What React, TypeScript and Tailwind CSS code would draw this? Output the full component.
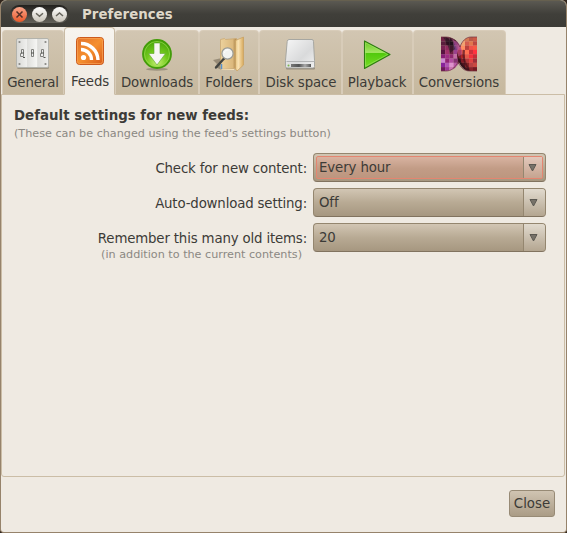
import React from "react";

function GeneralIcon() {
  return (
    <svg width="36" height="36" viewBox="0 0 36 36">
      <defs>
        <linearGradient id="plate" x1="0" x2="1" y1="0" y2="0">
          <stop offset="0" stopColor="#d8d8d5" />
          <stop offset=".33" stopColor="#f0f0ee" />
          <stop offset=".34" stopColor="#dfdfdc" />
          <stop offset=".64" stopColor="#f6f6f4" />
          <stop offset=".66" stopColor="#dcdcd9" />
          <stop offset="1" stopColor="#eeeeec" />
        </linearGradient>
      </defs>
      <rect x="2" y="30" width="32" height="3" rx="1.5" fill="#8d8371" opacity=".7" />
      <rect x="1.5" y="2.5" width="32" height="29" rx="1.5" fill="url(#plate)" stroke="#b3b3ac" />
      <path d="M6.500 13.500h2v7h-3v-3h1zM16.500 13.500h2v7h-2zM26.500 13.500h2v7h-3v-3h1z" fill="#eee" stroke="#80817d" />
      <path d="M6 17h3M16 17h3M26 17h3M8 21.500h2M28.500 21.500h2" stroke="#555753" />
      {[4.5, 30.5].map((x) => [6, 28].map((y) => <circle key={`${x}-${y}`} cx={x} cy={y} r="1.1" fill="#898985" />))}
    </svg>
  );
}

function FeedsIcon() {
  return (
    <svg width="36" height="36" viewBox="0 0 36 36">
      <defs>
        <linearGradient id="rss" x1="0" y1="0" x2="1" y2="1">
          <stop offset="0" stopColor="#e2702c" />
          <stop offset=".5" stopColor="#f5902f" />
          <stop offset="1" stopColor="#d85a1a" />
        </linearGradient>
      </defs>
      <rect x="4.5" y="3.5" width="27" height="27" rx="3" fill="url(#rss)" stroke="#cc5a1d" />
      <rect x="5.5" y="4.5" width="25" height="25" rx="2" fill="none" stroke="#f8a153" opacity=".75" />
      <circle cx="11.5" cy="23.5" r="2.6" fill="#fff" />
      <path d="M9 15.5a10.5 10.5 0 0 1 10.5 10.5M9 9.5a17 17 0 0 1 17 16.5" stroke="#fff" strokeWidth="3.4" fill="none" />
    </svg>
  );
}

function DownloadsIcon() {
  return (
    <svg width="36" height="36" viewBox="0 0 36 36">
      <defs>
        <radialGradient id="down" cx=".5" cy=".8" r=".75">
          <stop offset="0" stopColor="#c5ef73" />
          <stop offset=".5" stopColor="#73c91d" />
          <stop offset="1" stopColor="#4aa80c" />
        </radialGradient>
      </defs>
      <ellipse cx="18" cy="33.3" rx="11" ry="1.5" fill="#776e5f" opacity=".55" />
      <circle cx="18" cy="18" r="14" fill="url(#down)" stroke="#439c0a" strokeWidth="1.8" />
      <circle cx="18" cy="18" r="12.5" fill="none" stroke="#9add50" opacity=".7" />
      <path d="M15 7h6v10.500h5.500L18 29 9.500 17.500H15z" fill="#f6f6f4" stroke="#5da42d" strokeWidth=".6" />
    </svg>
  );
}

function FoldersIcon() {
  return (
    <svg width="36" height="36" viewBox="0 0 36 36">
      <defs>
        <linearGradient id="folder" x1="0" x2="1" y1="0" y2="0">
          <stop offset="0" stopColor="#e7c583" />
          <stop offset=".35" stopColor="#fae3b4" />
          <stop offset="1" stopColor="#d7a95c" />
        </linearGradient>
        <linearGradient id="folderBack" x1="0" x2="1" y1="0" y2="0">
          <stop offset="0" stopColor="#ecd19c" />
          <stop offset=".75" stopColor="#dcb97d" />
          <stop offset="1" stopColor="#a98248" />
        </linearGradient>
      </defs>
      <path d="M2 24l9-2v12l-7-3 2-3z" fill="#776b58" opacity=".6" />
      <path d="M9.5 3.5l4-1 1 1 11-1v30h-16z" fill="url(#folderBack)" stroke="#cbaa74" strokeWidth=".8" />
      <path d="M24.500 4.500l8-3.500v28L26 35l-1.500-2z" fill="url(#folder)" stroke="#c9a263" strokeWidth=".8" />
      <path d="M10 33l13 .5" stroke="#f8e2b5" />
      <path d="M10.5 28v5" stroke="#5592d0" strokeWidth="1.5" />
      <path d="M13 22.5L5 31.5" stroke="#434441" strokeWidth="2.4" strokeLinecap="round" />
      <circle cx="16.5" cy="17.5" r="5.6" fill="#f2f3f1" stroke="#989a96" strokeWidth="1.2" />
      <path d="M13.5 17a3.5 3.5 0 0 1 4-3" fill="none" stroke="#fff" />
    </svg>
  );
}

function DiskIcon() {
  return (
    <svg width="36" height="36" viewBox="0 0 36 36">
      <defs>
        <linearGradient id="disk" x1="0" y1="0" x2="1" y2="1">
          <stop offset="0" stopColor="#f6f6f6" />
          <stop offset=".6" stopColor="#d9dadb" />
          <stop offset="1" stopColor="#f1f1f1" />
        </linearGradient>
        <linearGradient id="slot">
          <stop offset="0" stopColor="#777" />
          <stop offset=".4" stopColor="#525354" />
          <stop offset=".7" stopColor="#aaa" />
          <stop offset="1" stopColor="#555" />
        </linearGradient>
      </defs>
      <rect x="3" y="31" width="29" height="2.5" rx="1" fill="#797062" opacity=".6" />
      <path d="M6 3.5h23q1.5 0 1.500 2l1 19v6q0 1.5-1.5 1.5H4q-1.500 0-1.500-1.500v-6l1.700-19q.3-2 1.800-2z" fill="url(#disk)" stroke="#a0a19d" strokeWidth=".9" />
      <path d="M3.500 25.500h28" fill="none" stroke="#b3b4b5" />
      <rect x="8" y="28" width="20" height="3" fill="url(#slot)" />
      <circle cx="5.500" cy="29.500" r="1" fill="#7bb64c" />
    </svg>
  );
}

function PlaybackIcon() {
  return (
    <svg width="36" height="36" viewBox="0 0 36 36">
      <defs>
        <linearGradient id="play" x1="0" y1="0" x2="0" y2="1">
          <stop offset="0" stopColor="#62c51a" />
          <stop offset=".42" stopColor="#a5e663" />
          <stop offset=".45" stopColor="#51c90c" />
          <stop offset="1" stopColor="#79dc28" />
        </linearGradient>
      </defs>
      <path d="M5.500 4.900v27.500L31 18.500z" fill="url(#play)" stroke="#2e7b12" strokeWidth="1.100" strokeLinejoin="round" />
      <path d="M6.500 6.800v23.600L28.700 18.500z" fill="none" stroke="#a4e86b" strokeWidth=".9" opacity=".6" />
    </svg>
  );
}

const leftTiles = [
  ["#722347", "#562039", "#37162a", "#3c1427", "#97334b"],
  ["#5b1d3d", "#411329", "#28111f", "#6c3073", "#9e599b"],
  ["#792252", "#8f2b5c", "#65213d", "#74407d", "#b75c98"],
  ["#591341", "#a2316c", "#6e2142", "#9a418e", "#bd5a7d"],
  ["#871e77", "#9f2d84", "#8f286f", "#c36ca5", "#853257"],
  ["#d08bd4", "#912276", "#b24b9f", "#863172", "#54152d"],
  ["#88239a", "#b155b4", "#de92cd", "#b958a8", "#632046"],
  ["#6e175c", "#9e3497", "#c971b1", "#973478", "#32101e"],
];
const rightTiles = [
  ["#b7603c", "#dc895b", "#d67852", "#bb5948", "#cc5947"],
  ["#e58a63", "#f1a271", "#d45c4d", "#e2754d", "#bd4740"],
  ["#d45356", "#ff8f62", "#b9413d", "#ef514a", "#f85743"],
  ["#9d2433", "#d64e45", "#ff7152", "#cd303b", "#ff323f"],
  ["#7d1d29", "#b12728", "#e35a49", "#f3303c", "#c52d38"],
  ["#471522", "#831b25", "#b73839", "#df4141", "#9f2e39"],
  ["#30131b", "#51151f", "#862226", "#b94243", "#c94841"],
  ["#1f1118", "#3b121b", "#6b1b22", "#8b222a", "#751821"],
];

function ConversionsIcon() {
  return (
    <svg width="36" height="36" viewBox="0 0 36 36">
      <defs>
        <clipPath id="wingLeft"><path d="M0 1h5c8 0 13 5 15 11 2 5 2 11-2 15-3 5-7 8-13 8H0z" /></clipPath>
        <clipPath id="wingRight"><path d="M36 1v34h-7c-7 0-12-8-13-16 0-3 1-5 3-8 2-6 6-10 11-10z" /></clipPath>
      </defs>
      <g clipPath="url(#wingLeft)">
        {leftTiles.map((row, y) => row.map((c, x) => <rect key={`${x}-${y}`} x={x * 4.2} y={y * 4.3 + 1} width="4.3" height="4.4" fill={c} />))}
        <path d="M5 1q7 4 9 12l-5 4Q7 8 2 1z" fill="#180f17" opacity=".5" />
      </g>
      <g clipPath="url(#wingRight)">
        {rightTiles.map((row, y) => row.map((c, x) => <rect key={`${x}-${y}`} x={x * 4 + 16} y={y * 4.3 + 1} width="4.1" height="4.4" fill={c} />))}
        <path d="M16 15q3 15 14 20H16z" fill="#190d14" opacity=".5" />
        <path d="M23 14q-2 9 5 20" fill="none" stroke="#210e17" strokeWidth="2" opacity=".45" />
      </g>
      <path d="M10 2.500c7 3 12 9 11 16l-4 2q-1-11-7-18z" fill="#b5508c" opacity=".55" />
      <path d="M0 1h5c6 0 11 4 14 10 2-6 6-10 11-10h6M0 35h5c5 0 9-3 12-9 3 6 6 9 12 9h7" fill="none" stroke="#713344" strokeWidth=".7" />
    </svg>
  );
}

const tabs = [
  { label: "General", width: "w-[62px]", Icon: GeneralIcon },
  { label: "Feeds", width: "w-[51px] pl-px", Icon: FeedsIcon },
  { label: "Downloads", width: "w-[84px]", Icon: DownloadsIcon },
  { label: "Folders", width: "w-[60px]", Icon: FoldersIcon },
  { label: "Disk space", width: "w-[83px] pl-px", Icon: DiskIcon },
  { label: "Playback", width: "w-[71px] pr-px", Icon: PlaybackIcon },
  { label: "Conversions", width: "w-[93px] pr-px", Icon: ConversionsIcon },
];

function TitleBar() {
  return (
    <header className="flex h-[27px] shrink-0 items-center rounded-t-[6px] border-t border-[#66604f] bg-linear-to-b from-[#5b5952] via-[#403f3a] via-50% to-[#3b3a35] pl-[9px]">
      <div className="flex h-[18px] w-[59px] items-center justify-center gap-[5px] rounded-full bg-linear-to-b from-[#22211e] to-[#63615a]">
        {["M4.500 4.500l6 6M10.500 4.500l-6 6", "M4 6.300l3.500 3 3.500-3", "M4 9l3.500-3L11 9"].map((d, i) => (
          <button key={d} className={`size-[15px] rounded-full ${i === 0 ? "bg-linear-to-b from-[#f9a387] to-[#e85725]" : "bg-linear-to-b from-white to-[#c9c4b9]"}`}>
            <svg width="15" height="15" viewBox="0 0 15 15" fill="none" stroke={i === 0 ? "#553027" : "#65635b"} strokeWidth="1.500">
              <path d={d} />
            </svg>
          </button>
        ))}
      </div>
      <h1 className="ml-[13px] pt-[2px] text-[13.33px] leading-4 font-bold tracking-[0.06px] text-[#dfd8c9]">Preferences</h1>
    </header>
  );
}

function Tab({ label, width, Icon }: (typeof tabs)[number]) {
  const active = label === "Feeds";
  return (
    <button
      className={`${width} flex shrink-0 flex-col items-center rounded-t-[4px] border ${
        active
          ? "z-10 h-[68px] border-[#c9bba5] border-b-[#efeae2] bg-linear-to-b from-[#f7f4ef] to-[#efeae2] pt-[6px]"
          : "h-[65px] border-[#d8ccb9] border-b-[#c9b99e] bg-linear-to-b from-[#d2c6b2] to-[#c6b89e] pt-[5px]"
      }`}
    >
      <Icon />
      <span className={`${active ? "mt-[3px]" : "mt-[2px]"} text-[13.33px] leading-[18px] tracking-[-0.12px] whitespace-nowrap`}>{label}</span>
    </button>
  );
}

function Select({ value, focused = false }: { value: string; focused?: boolean }) {
  return (
    <button className="flex h-[29px] w-[233px] overflow-hidden rounded-[4px] border border-[#94866f] border-b-[#81735f] bg-linear-to-b from-[#d2c6b4] via-[#b8aa94] via-50% to-[#a69780] text-left">
      <span className={`flex w-full ${focused ? "m-[2px] h-[23px] rounded-[2px] border border-[#e48570] bg-linear-to-b from-[#d8b3a1] via-[#c29c86] via-55% to-[#bd967f]" : "h-full"}`}>
        <span className={`flex-1 ${focused ? "pl-[2px] leading-[21px]" : "pl-[5px] leading-[27px]"} text-[13.33px] tracking-[-0.12px]`}>{value}</span>
        <span className={`flex justify-center border-l border-[#94866f] ${focused ? "w-[19px] bg-linear-to-b from-[#e2c8bb] to-[#c5a490] pt-[6px]" : "w-[22px] bg-linear-to-b from-[#e1dace] to-[#b4a691] pt-[9px]"}`}>
          <svg className={focused ? "-ml-px" : "-ml-[2px]"} width="9" height="9" viewBox="0 0 9 9">
            <path d="M1 1.500h7L4.500 8z" fill="#777269" stroke="#5b5851" />
          </svg>
        </span>
      </span>
    </button>
  );
}

export default function App() {
  return (
    <div className="h-[533px] w-[567px] overflow-hidden bg-[#30251c] text-[#3c3b37]" style={{ fontFamily: '"DejaVu Sans", sans-serif' }}>
      <div className="flex h-full flex-col rounded-t-[6px] rounded-b-[4px] border-r border-b border-l border-[#96836b] bg-[#efeae2]">
        <TitleBar />
        <nav className="flex h-[68px] shrink-0 items-end pl-px">
          {tabs.map((tab) => <Tab key={tab.label} {...tab} />)}
        </nav>
        <main className="-mt-px mr-px h-[383px] shrink-0 rounded-b-[3px] border border-[#cbbda6] pt-[12px] pr-[11px] pl-[12px]">
          <h2 className="h-[18px] text-[13.33px] leading-[18px] font-bold tracking-[0.03px] whitespace-nowrap">Default settings for new feeds:</h2>
          <p className="h-[18px] text-[11.2px] leading-[18px] whitespace-nowrap text-[#8b8882]">(These can be changed using the feed's settings button)</p>
          <div className="mt-[10px] flex flex-col gap-[6px]">
            {[
              ["Check for new content:", "Every hour"],
              ["Auto-download setting:", "Off"],
              ["Remember this many old items:", "20"],
            ].map(([label, value], i) => (
              <div key={label} className="flex h-[29px] items-center justify-end gap-[6px] pr-[7px]">
                <label className="pt-[2px] text-[13.33px] leading-[18px] tracking-[-0.16px] whitespace-nowrap">{label}</label>
                <Select value={value} focused={i === 0} />
              </div>
            ))}
          </div>
          <p className="-mt-[6px] w-[288px] text-right text-[11.2px] leading-[18px] whitespace-nowrap text-[#8b8882]">(in addition to the current contents)</p>
        </main>
        <footer className="flex justify-end pt-[13px] pr-[11px]">
          <button className="h-[27px] w-[46px] rounded-[3px] border border-[#978a75] bg-linear-to-b from-[#d0c4b2] to-[#aa9c86] text-[13.33px] leading-[24px]">Close</button>
        </footer>
      </div>
    </div>
  );
}
